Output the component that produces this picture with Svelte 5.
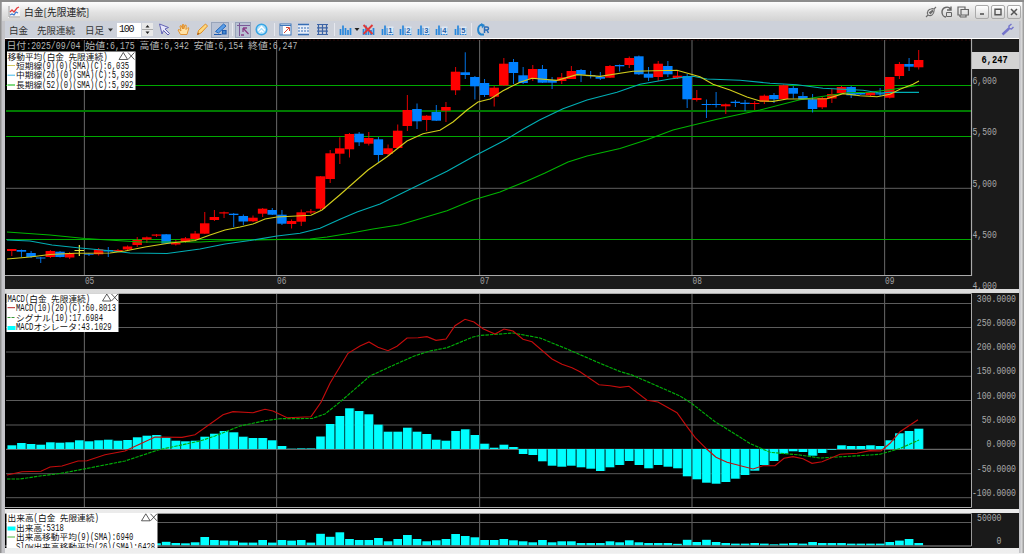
<script>
  const PITCH = 9.648;
  const bx = (i) => 11.8 + PITCH * i;
  const months = [[84.4, '05'], [276.6, '06'], [479.6, '07'], [692, '08'], [884.6, '09']];

  // colour, high, body top, body bottom, low
  const candles = [
    'r 249 249 251 256','b 249.5 250 251.7 257','b 251 253 257 258','b 257 257.5 258.5 263','r 250 251 257 258',
    'b 251 251.7 257 257.5','r 252 253 257.5 259','y 245 250 251 256','b 253 253.7 254.7 256','r 248 249.3 254.3 255.5',
    'b 247 250 251.5 257','r 249 250 251 252','r 245.5 246.5 249.5 250','r 237 240 245 247','r 236.5 237.3 239.5 243',
    'r 234 234.5 235.7 237','b 234 234.3 243.5 244','r 240 243 244.5 245.5','r 237 238.3 242 243','r 231 233.5 239 240',
    'r 212 223.3 233.7 234','r 210 217 220 221','r 211.5 212.3 213.5 218','b 213 213.7 215 227','b 214.5 216 221.5 225',
    'r 215.5 217.7 221.3 222','r 208 208.7 213.7 217','b 208 210 214.7 215','b 210 214.7 223.7 225','r 219.5 221 224 228.5',
    'r 209.5 212.3 221.7 226','r 209 211.3 212.5 214','r 176 176.3 208.7 210','r 150 153.3 179 183','r 137.3 148.3 153.7 164',
    'r 133 134 149.3 157.5','b 132 133.7 142.3 146','r 132 138 143.7 145.5','b 137 139.3 155 162.5','r 144.5 148.3 154 155',
    'r 124.5 130.7 148 149','r 95 110 126 131','b 103.5 109 121.3 129','r 115 115.7 120 131','b 105 112 120.7 121',
    'r 102 107 110.7 122','r 67 71.7 90.3 95','b 52.3 72.3 75 79','b 76 77 86.3 99.5','b 79 83 95 97',
    'r 86 87.7 96.7 106.5','r 58 63.7 85.3 86','b 59 62 73 84','b 67 75.3 83 84','r 65 69 79 81',
    'b 65 69 82.7 83','b 77 80 82.7 89','r 73 77.3 81 84','r 66 71 79 79','b 69 70 74.7 82',
    'b 71 75 76.2 78.5','b 72 76.7 78.7 80','r 65 66 77.7 78','b 64.5 65 66.3 71.5','r 56.5 58 65 68',
    'b 55.5 56.3 74.3 75','b 67 73.7 77.7 81','r 61 63.7 77 81','b 61 66 74.3 77','r 71 75.7 78 79',
    'b 74 76 99.3 108','r 90 98 100 101.5','b 99.5 104 105 118','b 92 104 105 107.5','r 103.5 104.3 106.3 114',
    'b 100 101.7 103 107','b 100 102.7 104 111','r 101 103 104 110','r 94.5 95.7 101.7 104','b 93 95 99.3 103',
    'r 84.5 85.3 99 100','b 86 88 93.7 98.5','b 92 96 99.3 100','b 94 99.3 109 112.5','r 97 98 107.3 109',
    'r 89 94 98.5 103','r 86 87 93 93','b 86 87 95.3 98','b 92 93 94.5 95','r 91 92 95.3 96',
    'b 88 93.3 94.5 96','r 77 77 97.7 98.5','r 62 64 76 79','b 58 64 66.7 71','r 50 60 67.3 69.5'
  ].map((s) => { const [c, ...v] = s.split(' '); return [c, ...v.map(Number)]; });
  const tone = { r: '#ff0000', b: '#0080ff', y: '#e8e840' };

  const short = '7,259 30,257 50,254.5 75,253.3 110,253 125,251 145,247 170,243 195,240.5 210,235 225,230 240,227 253,224 265,219 277,217 311,215.3 322,210 340,194.7 368,170 387,156.7 407,141 423,133.7 440,130.3 453,122 467,110 478,102 490,99 493,97.3 503,90.7 520,82.3 532,78.3 557,80.3 577,74.7 600,76.3 633,71.3 677,70.3 700,76.7 713,84.3 730,90 747,97 760,101 773,101.3 787,99 827,98.7 843,93.7 860,95.7 877,96.7 890,94.3 900,89.3 913,84.3 919,81';
  const mid = '7,240 30,241 52,245 80,248 113,251 130,253 167,253.5 200,249 225,244 250,240.5 277,236 300,233.3 320,228.3 340,219.3 357,212 380,204 410,189.3 447,171.3 473,156.7 500,142.7 507,139 523,129.3 540,119.7 563,108.7 587,100 617,92.3 640,84.3 670,79 693,76.3 707,79 740,80.3 770,83.3 797,84.7 823,88.3 863,90.3 880,93 890,92.3 919,92.3';
  const long = '7,232 50,235 85,238.5 140,242 200,242 240,240 310,239 327,237 350,233.3 373,229 400,224.7 420,218.7 447,210.7 473,200 500,192 527,181 545,173 568,162 587,156 620,148.5 647,139.7 673,130 717,119.3 760,110 800,99.7 827,95.7 847,92.7 870,92.3 893,89.3 919,85.3';

  const macd = '7,475 22,471.7 41,471.3 50,467 62,466 78,461 87,460.7 105,454.7 125,451 155,437 182,437.3 195,434.7 223,414.7 233,411.7 253,412.7 265,409.3 273,411 287,417.7 311,416.7 321,402.3 330,383.3 348,353.3 360,346 369,342 378,347.3 388,350.7 397,346.3 407,338 418,337.7 427,336.7 436,340.3 446,339 455,325.7 465,319.3 474,322 483,328.7 495,334 504,329 513,331 523,339.3 532,341.7 552,359 562,364.3 572,367.7 580,371.7 599,384.7 610,385.7 620,387.3 629,386.3 647,400.3 658,402 677,412.7 687,426.7 695,437.3 707,449.3 716,457.3 727,462.3 753,469 763,465.7 775,465.7 784,458.3 793,456.7 803,458.7 812,463.3 822,461.7 840,454.3 857,453.3 870,450.7 881,451 890,443.3 900,431.7 918,419.7';
  const signal = '7,479 20,479 40,476 60,473.5 84,469 125,461 158,450 200,441 215,436 240,426 265,420.7 280,418.7 312,418.5 325,414 340,402 370,376 395,364.5 415,355.7 430,351 447,347.7 473,337 480,335.5 513,333 540,338 567,349 600,363.3 620,371.5 632,375 655,385 680,396 692,403.7 715,421.7 735,434 750,443.5 770,452.3 800,455 820,458 850,456.3 880,454.3 900,448.5 919,440';
  const hist = [3.7,6,5,4.3,6.7,6.3,6.7,8.7,7.7,8.7,9.3,8.3,9,11.7,13.3,14,11.3,8.3,7.7,8.3,12.3,15.3,18,16.7,12.3,11,11,8.7,3,0.3,0.6,0.6,12.5,25,33,40.7,38,34.7,24.3,17.3,17.3,21.3,17.3,15,9.3,8.3,18,19.7,14,5.3,1.3,4.3,2,-5,-6,-12.3,-16.7,-17.7,-16.7,-18.3,-19.7,-22,-18.3,-16,-12,-16,-19.3,-16,-17.7,-19.3,-27.3,-30.3,-33.7,-34.7,-33,-29.7,-26,-21.7,-16,-12,-4.7,-2.3,-3,-6.7,-4,-0.7,3.7,3,3,3.7,3,8.7,15.7,18,20.3];
  const volume = [3,3,3,3,3,3,3,3,3,3,3,3,3,3,3,2,3.5,2.3,2,3,8.3,5.3,4.7,4.5,2.7,2.7,5.3,2.7,5.3,4.7,5.3,2.7,11.5,8.5,13,6.3,5.3,5.3,7.3,4,6.3,10.3,6.3,4,5,6.3,11.3,9.3,8,5.3,5.3,6.3,5,4,3,5.3,3,4,4,2.3,2.3,2.3,4,3,5,3,2.3,2.3,2.3,1.5,5.5,3.3,5.5,3.3,2.3,1.7,1.7,2.3,1.7,1,1.7,2.3,1.7,3.3,2.3,2.3,2.3,1.7,1.7,1.7,1.7,3.3,4.7,6.3,2.3];

  const cellRuns = (text, x, unit) => {
    const out = [];
    let pos = x;
    for (const m of text.matchAll(/[\x20-\x7e]+|[^\x20-\x7e]+/g)) {
      const half = m[0].charCodeAt(0) < 127;
      const body = half ? m[0].trim() : m[0];
      const lead = half ? m[0].length - m[0].trimStart().length : 0;
      if (body) out.push({ t: body, half, x: pos + lead * unit, w: body.length * unit * (half ? 1 : 2) });
      pos += m[0].length * unit * (half ? 1 : 2);
    }
    return out;
  };

  const priceLabels = [['6,000', 83.5], ['5,500', 135], ['5,000', 187], ['4,500', 238], ['4,000', 288.5]];
  const macdGrid = [303.5, 327.5, 352, 376.3, 400.5, 425, 449.3, 473.7, 497.7];
  const macdLabels = ['300.0000', '250.0000', '200.0000', '150.0000', '100.0000', '50.0000', '0.0000', '-50.0000', '-100.0000'];

  const tools = [
    ['cursor', 17], ['hand', 20], ['pencil', 18], ['draw', 18], ['sep', 6],
    ['axis', 16], ['round', 21], ['sep', 4], ['win', 18], ['grid', 19], ['grid2', 18], ['sep', 6],
    ['bars', 17], ['arrow', 6], ['barsx', 17], ['bars1', 20], ['bars2', 17], ['bars3', 18], ['bars4', 19], ['bars5', 18], ['sep', 5], ['reload', 18]
  ];
</script>

{#snippet cells(text, x, y, unit, fill, size)}
  {#each cellRuns(text, x, unit) as r}
    <text class="mono" x={r.x} y={y} fill={fill} font-size={r.half ? size * 1.14 : size * 0.97} textLength={r.w} lengthAdjust="spacingAndGlyphs">{r.t}</text>
  {/each}
{/snippet}

{#snippet legendButtons(x, y)}
  <path d="M{x} {y + 7}l4.3-7 4.3 7zM{x + 9} {y}l6.4 7m0-7l-6.4 7" fill="none" stroke="#333" stroke-width=".8" />
{/snippet}

{#snippet verticals(y1, y2)}
  {#each months as [x]}
    <path d="M{x} {y1}V{y2}" stroke="#606060" stroke-width="1.1" />
  {/each}
{/snippet}

<div class="window">
  <header class="title">
    <svg class="logo" width="12" height="12" viewBox="0 0 12 12">
      <path d="M1 0V11H12" fill="none" stroke="#999" />
      <path d="M2 6l2-2 2 2 3-4 2-1" fill="none" stroke="#e23b3b" stroke-width="1.3" />
      <path d="M2 9l2-1 2 1 2-3 2 1" fill="none" stroke="#3b78d0" stroke-width="1.2" />
    </svg>
    <span class="name">白金[先限連続]</span>
    <div class="actions">
      <svg width="12" height="12" viewBox="0 0 12 12" fill="none" stroke="#6c6c6c" stroke-width="1.1">
        <path d="M1 11L3 9M9 3l2-2M3 9C1 6 4 3 6 3c2-1 4 0 3 2M3 9c3 2 6-1 6-4M4 7l4-3M5 8l3-3" />
      </svg>
      <svg width="12" height="12" viewBox="0 0 12 12" fill="none" stroke="#666" stroke-width="1.4">
        <path d="M9.500 3C7-.5 1 1.500 1 6c0 3 2 5 4 5M10 .5v3.500H6" /><path d="M5.500 6.500h5v4h-5z" stroke-width="1" />
      </svg>
      <svg width="12" height="12" viewBox="0 0 12 12" fill="none" stroke="#666" stroke-width="1.2">
        <path d="M3 9H1V1h7v2M3 11h6V9M3 9v2M4 3.500h7.400V9H4z" />
      </svg>
    </div>
    <div class="winbtns">
      <button aria-label="minimize"><svg width="8" height="8"><path d="M2 6h4" stroke="#555" stroke-width="1.6" /></svg></button>
      <button aria-label="maximize"><svg width="8" height="8"><path d="M1 1.3h6v5.4H1z" fill="none" stroke="#555" stroke-width="1.4" /></svg></button>
      <button aria-label="close"><svg width="8" height="8"><path d="M1 1l6 6M7 1L1 7" stroke="#555" stroke-width="1.5" /></svg></button>
    </div>
  </header>

  <nav class="toolbar">
    <span class="w1">白金</span><span class="w2">先限連続</span><span class="w3">日足</span>
    <svg width="12" height="17"><path d="M4 7.5h5l-2.5 3z" fill="#333" /></svg>
    <span class="count">100</span>
    <span class="spin"><svg width="11" height="13"><path d="M0 6.5h11" stroke="#aaa" /><path d="M3.5 4.5h4L5.5 2zM3.5 8.5h4l-2 2.5z" fill="#222" /></svg></span>
    {#each tools as [kind, w]}
      <span class="tool" class:on={kind === 'draw' || kind === 'axis'} style="width:{w}px">
        {#if kind === 'sep'}
          <i></i>
        {:else}
          <svg width={kind === 'arrow' ? 6 : 13} height="13" viewBox={kind === 'arrow' ? '0 0 6 13' : '0 0 13 13'} fill="none">
            {#if kind === 'cursor'}
              <path d="M1.500 1l9 3.500-3.500 1.500 4.500 4.500-1.500 1.500-4.500-4.500-1.500 3.500z" fill="#e6e6fa" stroke="#6262b4" />
            {:else if kind === 'hand'}
              <path d="M3.500 11.500L1 7l1-.6L4 8 3 3l1.200-.4L5.500 6V1.500h1.200V6L8 2l1.200.3L9 6.500 11 4.500l.8.6L10 11.500z" fill="#ffe2a6" stroke="#e08c26" stroke-width=".9" />
            {:else if kind === 'pencil'}
              <path d="M1.500 11.500l1-4L9.500 1l2 2-6.500 7z" fill="#ffd87c" stroke="#dc8c28" />
              <path d="M1 12l1-2.500 1.500 1.500z" fill="#a05818" />
            {:else if kind === 'draw'}
              <path d="M1.500 8.500L9.500 1l2.500 2-7.500 7z" fill="#5a9ee8" stroke="#2869ba" />
              <path d="M0 11.500h7.500M8.500 7.500H12V11H8.500z" fill="#4a8bd0" stroke="#1d5bb0" stroke-width="1.200" />
            {:else if kind === 'axis'}
              <path d="M2.500 0v13M0 2.500h13" stroke="#7a5a98" /><path d="M6 5l5.500 6M6 5v4M6 5h4M4 12h3" stroke="#8a3f87" stroke-width="1.300" />
            {:else if kind === 'round'}
              <circle cx="6.500" cy="6.500" r="5.300" fill="#a8dcf8" stroke="#36a5e5" stroke-width="1.500" />
              <path d="M3 7.500l3.500-4 3.500 4M4.500 9.500l2-2 2 2" stroke="#fff" stroke-width="1.300" />
            {:else if kind === 'win'}
              <rect x="1" y="1" width="11" height="11" fill="#fff" stroke="#3d76ba" />
              <path d="M1 2.500h11M3 3v9" stroke="#3d76ba" /><path d="M5 10l5-5M7 4.500h3.500V8" stroke="#d64532" />
            {:else if kind === 'grid'}
              <rect x="1" y="1" width="11" height="11" fill="#e6edf8" />
              <path d="M1 1.500h11M1 11.500h11" stroke="#356db5" stroke-width="1.400" /><path d="M1 5h11M1 8h11" stroke="#356db5" stroke-dasharray="2 1" />
            {:else if kind === 'grid2'}
              <path d="M1 1.500h11M1 4.800h11M1 8.200h11M1 11.500h11M2.500 1v11M6.500 1v11M10.500 1v11" stroke="#3c63a5" stroke-width="1.200" />
            {:else if kind === 'arrow'}
              <path d="M.5 5h5L3 8z" fill="#222" />
            {:else if kind === 'reload'}
              <path d="M5 2H3.500C0 4 .5 10.500 4 11.500h3" stroke="#2484ce" stroke-width="1.900" />
              <path d="M4 0l4 2-3 3.500z" fill="#2484ce" />
              <path d="M7.500 10V4H10c2 0 2 3 0 3H7.500M9.800 7l1.700 3" stroke="#2a6cb8" stroke-width="1.500" />
            {:else}
              <path d="M1.500 12V6M4 12V2.500M6.500 12V5M9 12V7M11.500 12V5" stroke="#2787dc" stroke-width="1.700" />
              {#if kind === 'barsx'}
                <path d="M1.500 2l9 9M10.500 2l-9 9" stroke="#e03838" stroke-width="1.900" />
              {:else if kind !== 'bars'}
                <rect x="6.500" y="3.500" width="6" height="7.500" fill="#dce8f5" />
                <text x="7.300" y="10" font-size="7.500" font-weight="700" fill="#2561a8" font-family="Liberation Sans, sans-serif">{kind.slice(4)}</text>
              {/if}
            {/if}
          </svg>
        {/if}
      </span>
    {/each}
    <svg class="wrench" width="13" height="13" viewBox="0 0 13 13"><path d="M1.500 11.500L8 5.500" stroke="#7474cc" stroke-width="2.400" /><path d="M10.500 1L8 3v2.500l2.500.5L12.500 4" fill="none" stroke="#7474cc" stroke-width="1.500" /></svg>
  </nav>

  <main class="charts">
    <section class="panel price">
      <svg width="1014" height="250" viewBox="5 39 1014 250">
        <rect x="5" y="39" width="1014" height="250" fill="#000" />
        <rect x="972" y="39" width="47" height="250" fill="#1a1a1a" />
        <rect x="5" y="276" width="967" height="13" fill="#1a1a1a" />
        <path d="M5 40H971" stroke="#300808" stroke-dasharray="2 2" />
        {@render verticals(40, 275)}
        <path d="M6 188.300H971" stroke="#606060" />
        <path d="M6 85.500H971M6 136.500H971M6 239.500H971" stroke="#00a800" stroke-width="1.200" />
        <path d="M6 111H971" stroke="#007a00" stroke-width="2" />
        {#each candles as [c, hi, top, bottom, low], i}
          <path d="M{bx(i)} {hi}V{low}" stroke={tone[c]} stroke-width={c === 'y' ? 1.200 : 0.900} />
          <rect x={bx(i) - 4.800} y={top} width="9.500" height={Math.max(bottom - top, 1)} fill={tone[c]} />
        {/each}
        <g fill="none" stroke-width="1.150">
          <polyline points={long} stroke="#00b400" />
          <polyline points={mid} stroke="#00aeb4" />
          <polyline points={short} stroke="#d2cd1c" />
        </g>
        <path d="M5 275.500H971.500V39" fill="none" stroke="#aaa" stroke-width="1.200" />
        {#each months as [x, m]}
          {@render cells(m, x + 0.500, 284, 4.700, '#a0a0a0', 10)}
        {/each}
        {#each priceLabels as [t, y]}
          {@render cells(t, 972.500, y, 4.850, '#a8a8a8', 10)}
        {/each}
        <rect x="972" y="52" width="47" height="17" fill="#d3d3d3" />
        <g font-weight="700">{@render cells('6,247', 981.500, 63, 5.250, '#000', 9.500)}</g>
        {@render cells('日付:2025/09/04 始値:6,175 高値:6,342 安値:6,154 終値:6,247', 6.500, 49, 4.930, '#b4b4b4', 9.800)}
        <rect x="7" y="51.500" width="128.500" height="38.500" fill="#fff" />
        {@render cells('移動平均(白金 先限連続)', 7.500, 59.500, 4.350, '#111', 8.800)}
        {@render legendButtons(119, 52.500)}
        {@render cells('短期線(9)(0)(SMA)(C):6,035', 16, 68.500, 4.350, '#111', 8.800)}
        {@render cells('中期線(26)(0)(SMA)(C):5,930', 16, 78.300, 4.350, '#111', 8.800)}
        {@render cells('長期線(52)(0)(SMA)(C):5,992', 16, 88, 4.350, '#111', 8.800)}
        <path d="M7.500 65.500H15" stroke="#d4c860" /><path d="M7.500 75.200H15" stroke="#40b8e8" /><path d="M7.500 85H15" stroke="#00b400" />
      </svg>
    </section>

    <section class="panel macd">
      <svg width="1014" height="216" viewBox="5 293 1014 216">
        <rect x="5" y="293" width="1014" height="216" fill="#000" />
        <rect x="972" y="293" width="47" height="216" fill="#1a1a1a" />
        {@render verticals(293, 507)}
        {#each macdGrid as y, i}
          <path d="M6 {y}H971" stroke={i === 6 ? '#808080' : '#5c5c5c'} stroke-width="1" />
          {@render cells(macdLabels[i], 1016 - macdLabels[i].length * 4.900, y - 2, 4.900, '#a8a8a8', 10)}
        {/each}
        {#each hist as h, i}
          <rect x={bx(i) - 4.350} y={h > 0 ? 449 - h : 449} width="8.700" height={Math.abs(h)} fill="#00ffff" />
          <path d="M{bx(i) + 4.700} 449v{-h}" stroke="#006f70" stroke-width=".8" />
        {/each}
        <g fill="none" stroke-width="1.150">
          <polyline points={signal} stroke="#00ad08" stroke-dasharray="3.500 1" />
          <polyline points={macd} stroke="#c40c0c" />
        </g>
        <path d="M5 293.500H971.500V507.500H5" fill="none" stroke="#aaa" />
        <rect x="6.500" y="293.500" width="112" height="38.500" fill="#fff" />
        {@render cells('MACD(白金 先限連続)', 7.500, 301.500, 4.350, '#111', 8.800)}
        {@render legendButtons(102.500, 294)}
        {@render cells('MACD(10)(20)(C):60.8013', 16, 310.800, 4.350, '#111', 8.800)}
        {@render cells('シグナル(10):17.6984', 16, 320.500, 4.350, '#111', 8.800)}
        {@render cells('MACDオシレータ:43.1029', 16, 330.300, 4.350, '#111', 8.800)}
        <path d="M7.500 307.700H15" stroke="#b82020" /><path d="M7.500 317.500H15" stroke="#389838" stroke-dasharray="3 1" />
        <rect x="7.500" y="326" width="8" height="4" fill="#00ffff" />
      </svg>
    </section>

    <section class="panel volume">
      <svg width="1014" height="35" viewBox="5 513 1014 35">
        <rect x="5" y="513" width="1014" height="35" fill="#000" />
        <rect x="972" y="513" width="47" height="35" fill="#1a1a1a" />
        {@render verticals(514, 545)}
        <path d="M6 522.500H971" stroke="#5c5c5c" />
        {#each volume as v, i}
          <rect x={bx(i) - 4.350} y={545.300 - v} width="8.700" height={v} fill="#00ffff" />
        {/each}
        <path d="M5 513.500H971.500V546H5" fill="none" stroke="#999" />
        {@render cells('50000', 977, 521, 4.900, '#a8a8a8', 10)}
        {@render cells('0', 996.500, 544, 4.900, '#a8a8a8', 10)}
        <rect x="6.500" y="513" width="151" height="35" fill="#fff" />
        {@render cells('出来高(白金 先限連続)', 7.500, 521, 4.350, '#111', 8.800)}
        {@render legendButtons(141.500, 513.800)}
        {@render cells('出来高:5318', 16, 530.500, 4.350, '#111', 8.800)}
        {@render cells('出来高移動平均(9)(SMA):6940', 16, 540, 4.350, '#111', 8.800)}
        {@render cells('Slow出来高移動平均(26)(SMA):6428', 16, 549.500, 4.350, '#111', 8.800)}
        <rect x="7.500" y="526.500" width="8" height="4" fill="#00ffff" /><path d="M7.500 537H15" stroke="#4ab83c" />
      </svg>
    </section>
  </main>
</div>

<style>
  :global(body) { margin: 0; overflow: hidden; }
  .window {
    box-sizing: border-box; width: 1024px; height: 554px; padding: 0 5px;
    display: flex; flex-direction: column; overflow: hidden;
    border-top: 2px solid #8c8c8c; border-bottom: 1px solid #f2f2f2;
    background: linear-gradient(90deg, #909090 0 1px, #c4c4c8 2px 1020px, #ddd 1022px, #a0a0a0 1023px);
    font-family: "Noto Sans CJK JP", "Liberation Sans", sans-serif;
  }
  .title {
    height: 19px; flex: none; margin: 0 -3px; padding: 0 0 0 6px; display: flex; align-items: center;
    background: linear-gradient(#fdfdfd, #e2e2e2 55%, #d3d3d3);
  }
  .logo { background: #f5f5f5; margin-right: 4px; }
  .name { font-size: 9.8px; line-height: 16px; color: #222; white-space: nowrap; }
  .actions { display: flex; gap: 4px; margin-left: auto; margin-right: 6px; }
  .winbtns { display: flex; gap: 2px; margin-right: 1px; }
  button {
    width: 14px; height: 14px; padding: 0; display: grid; place-items: center;
    border: 1px solid #aaa; border-radius: 2px; background: linear-gradient(#fff, #d6d6d6);
  }
  svg { display: block; flex: none; }
  .toolbar {
    height: 17px; flex: none; display: flex; align-items: center; padding-left: 4px;
    background: #cdd1da; border-bottom: 1px solid #fff; color: #333; font-size: 9.5px; line-height: 16px; white-space: nowrap;
  }
  .w1 { width: 28px; } .w2 { width: 48px; } .w3 { width: 19px; }
  .count {
    box-sizing: border-box; width: 24px; height: 14px; margin-left: 1px; padding-left: 2px; background: #fff;
    font: 10px/13px "Liberation Mono", monospace; letter-spacing: -1.2px; color: #111;
  }
  .spin { background: #e8e8e8; margin: 0 3px 0 1px; }
  .tool { height: 16px; flex: none; display: flex; align-items: center; justify-content: center; }
  .tool.on { background: #b9c2d4; box-shadow: inset 0 0 0 1px #98a4ba; }
  .tool i { width: 1px; height: 13px; background: #e6e8ee; }
  .wrench { margin-left: auto; margin-right: 5px; }
  .charts { flex: 1; display: flex; flex-direction: column; gap: 4px; background: linear-gradient(#c8c8c8, #eee); }
  .panel { flex: none; overflow: hidden; }
  .price { height: 250px; } .macd { height: 216px; } .volume { height: 35px; }
  .mono { font-family: "Liberation Mono", "Noto Sans CJK JP", monospace; }
</style>
